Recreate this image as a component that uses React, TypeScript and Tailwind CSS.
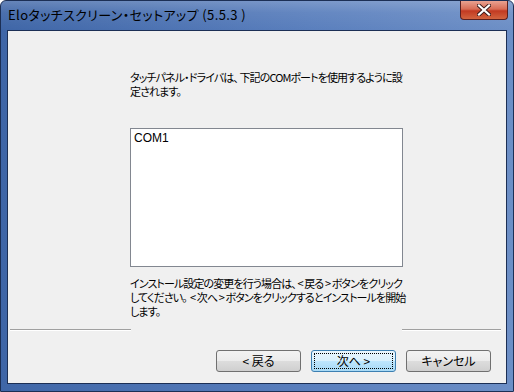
import React from 'react';

const jp = "font-['Noto_Sans_CJK_JP','Noto_Sans',sans-serif]";
const body = `text-[11px] leading-[14px] text-black ${jp} [font-feature-settings:'palt'] tracking-[-0.9px] whitespace-pre`;

function Button({ label, primary }: { label: string; primary?: boolean }) {
  return (
    <button
      className={`relative w-[85px] h-[22px] rounded-[3px] border text-[12px] text-black ${jp} [font-feature-settings:'palt'] ${
        primary
          ? 'border-[#3c7fb1] bg-[linear-gradient(#eaf6fd_0%,#d9f0fc_50%,#bee6fd_50%,#a7d9f5_100%)]'
          : 'border-[#707070] bg-[linear-gradient(#f2f2f2_0%,#ebebeb_50%,#dddddd_50%,#cfcfcf_100%)]'
      }`}
    >
      {primary && <span className="absolute inset-[2px] border border-dotted border-black" />}
      <span className="relative leading-none">{label}</span>
    </button>
  );
}

export default function App() {
  return (
    <div className="w-[514px] h-[392px] flex flex-col rounded-t-[6px] border border-[#1c2f55] bg-[linear-gradient(90deg,#3f66a7,#5a7fbd_60%,#6d8fc6)] overflow-hidden">
      {/* Title bar */}
      <div className="h-[29px] flex items-start shrink-0 bg-[linear-gradient(#ffffff33,#ffffff10_40%,#00000000)]">
        <div className={`pl-[7px] pt-[5px] text-[13px] leading-[18px] tracking-[0.4px] text-black ${jp} [font-feature-settings:'palt'] whitespace-nowrap`}>
          Eloタッチスクリーン・セットアップ (5.5.3 )
        </div>
        <div className="ml-auto mr-[5px] w-[48px] h-[19px] rounded-b-[4px] border border-t-0 border-[#5a2020] bg-[linear-gradient(#e9a291_0%,#d86c55_45%,#c23a22_55%,#d2643f_100%)] flex items-center justify-center">
          <svg width="14" height="12" viewBox="0 0 14 12">
            <path d="M2 1.5 L12 10.5 M12 1.5 L2 10.5" stroke="#3a1a1a" strokeWidth="4" strokeLinecap="square" />
            <path d="M2 1.5 L12 10.5 M12 1.5 L2 10.5" stroke="#ffffff" strokeWidth="2.2" strokeLinecap="square" />
          </svg>
        </div>
      </div>

      {/* Client area */}
      <div className="flex-1 mx-[6px] mb-[7px] border border-[#1c2f55] bg-[#f0f0f0] flex flex-col">
        <div className={`pl-[122px] pt-[39px] ${body}`}>
          {'タッチパネル・ドライバは、 下記のCOMポートを使用するように設\n定されます。'}
        </div>

        <div className="ml-[122px] mt-[30px] w-[273px] h-[139px] border border-[#828790] bg-white px-[3px] pt-[2px]">
          <div className="text-[12px] leading-[14px] text-black font-['Liberation_Sans',sans-serif]">COM1</div>
        </div>

        <div className={`pl-[122px] pt-[9px] ${body}`}>
          {'インストール設定の変更を行う場合は、 < 戻る > ボタンをクリック\nしてください。  < 次へ > ボタンをクリックするとインストールを開始\nします。'}
        </div>

        <div className="mt-[11px] flex items-center">
          <div className="ml-[2px] w-[121px] h-[2px] border-t border-[#a0a0a0] border-b border-b-white" />
          <div className="ml-auto mr-[5px] w-[99px] h-[2px] border-t border-[#a0a0a0] border-b border-b-white" />
        </div>

        <div className="mt-[19px] flex gap-[10px] pl-[208px]">
          <Button label="< 戻る" />
          <Button label="次へ >" primary />
          <Button label="キャンセル" />
        </div>
      </div>
    </div>
  );
}
